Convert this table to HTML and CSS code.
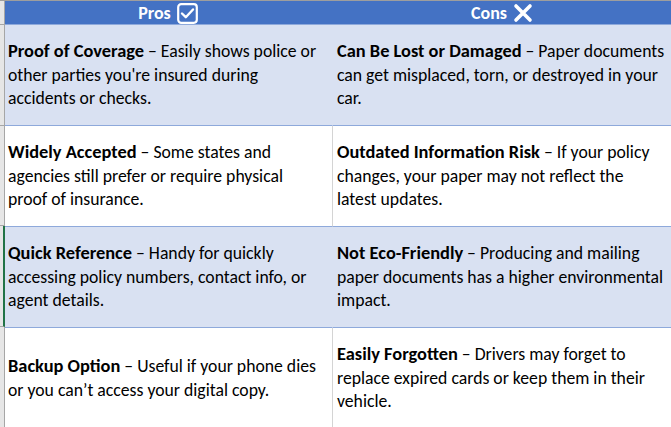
FILE: index.html
```html
<!DOCTYPE html>
<html>
<head>
<meta charset="utf-8">
<link rel="stylesheet" href="styles.css">
</head>
<body>
<div class="sheet">
  <div class="rowheads">
    <div class="rh rh-head"></div>
    <div class="rh rh-row"></div>
    <div class="rh rh-row"></div>
    <div class="rh rh-row rh-sel"></div>
    <div class="rh rh-row rh-last"></div>
  </div>
  <div class="grid">
    <div class="hcell hcell-left">Pros
      <svg class="ico" width="21" height="21" viewBox="0 0 21 21"><rect x="1.2" y="1.2" width="18.6" height="18.6" rx="3" fill="none" stroke="#fff" stroke-width="2.2"/><path d="M5 10.5 L8.8 14.2 L16 6.5" fill="none" stroke="#fff" stroke-width="2.4" stroke-linecap="round" stroke-linejoin="round"/></svg>
    </div>
    <div class="hcell">Cons
      <svg class="ico" width="20" height="20" viewBox="0 0 20 20"><path d="M3 3 L17 17 M17 3 L3 17" fill="none" stroke="#fff" stroke-width="3.6" stroke-linecap="round"/></svg>
    </div>

    <div class="cell shade left"><p><b>Proof of Coverage</b> – Easily shows police or<br>other parties you're insured during<br>accidents or checks.</p></div>
    <div class="cell shade"><p><b>Can Be Lost or Damaged</b> – Paper documents<br>can get misplaced, torn, or destroyed in your<br>car.</p></div>

    <div class="cell left"><p><b>Widely Accepted</b> – Some states and<br>agencies still prefer or require physical<br>proof of insurance.</p></div>
    <div class="cell"><p><b>Outdated Information Risk</b> – If your policy<br>changes, your paper may not reflect the<br>latest updates.</p></div>

    <div class="cell shade left"><p><b>Quick Reference</b> – Handy for quickly<br>accessing policy numbers, contact info, or<br>agent details.</p></div>
    <div class="cell shade"><p><b>Not Eco-Friendly</b> – Producing and mailing<br>paper documents has a higher environmental<br>impact.</p></div>

    <div class="cell left last"><p><b>Backup Option</b> – Useful if your phone dies<br>or you can’t access your digital copy.</p></div>
    <div class="cell last"><p><b>Easily Forgotten</b> – Drivers may forget to<br>replace expired cards or keep them in their<br>vehicle.</p></div>
  </div>
</div>
</body>
</html>
```
FILE: styles.css
```css
html, body {
  margin: 0;
  padding: 0;
  background: #ffffff;
  overflow: hidden;
}
.sheet {
  display: flex;
  width: 671px;
  height: 427px;
  border-top: 1px solid #9e9e9e;
  box-sizing: border-box;
  font-family: Carlito, Lato, "Open Sans", sans-serif;
  color: #000;
}
.rowheads {
  width: 5px;
  flex: none;
  display: flex;
  flex-direction: column;
}
.rh {
  background: #e6e6e6;
  border-right: 1px solid #a6a6a6;
  border-bottom: 1px solid #a6a6a6;
  box-sizing: border-box;
}
.rh-head { height: 24px; }
.rh-row { height: 101px; }
.rh-sel { border-right: 2px solid #217346; }
.rh-last { border-bottom: none; height: 100px; }
.grid {
  flex: 1;
  min-width: 0;
  display: grid;
  grid-template-columns: 328px 338px;
  grid-template-rows: 24px 101px 101px 101px 100px;
  overflow: hidden;
}
.hcell {
  background: #4472c4;
  border-bottom: 1px solid #8ea9db;
  color: #fff;
  font-weight: bold;
  font-size: 18px;
  display: flex;
  align-items: center;
  justify-content: center;
  gap: 6px;
  box-sizing: border-box;
  padding-top: 1px;
}
.hcell-left { padding-right: 2px; }
.ico { display: block; }
.cell {
  display: flex;
  align-items: center;
  border-bottom: 1px solid #8ea9db;
  box-sizing: border-box;
  padding: 0 4px 0 4px;
  font-size: 17.7px;
  line-height: 23.5px;
  white-space: nowrap;
  min-width: 0;
  overflow: hidden;
}
.cell b { font-size: 18.4px; }
.cell.left {
  padding-left: 3px;
  border-right: 1px solid #d4d4d4;
}
.cell.shade {
  background: #d9e1f2;
}
.cell.shade.left {
  border-right-color: #d9e1f2;
}
.cell.last { border-bottom: none; }
.cell p { margin: 0; }
```
